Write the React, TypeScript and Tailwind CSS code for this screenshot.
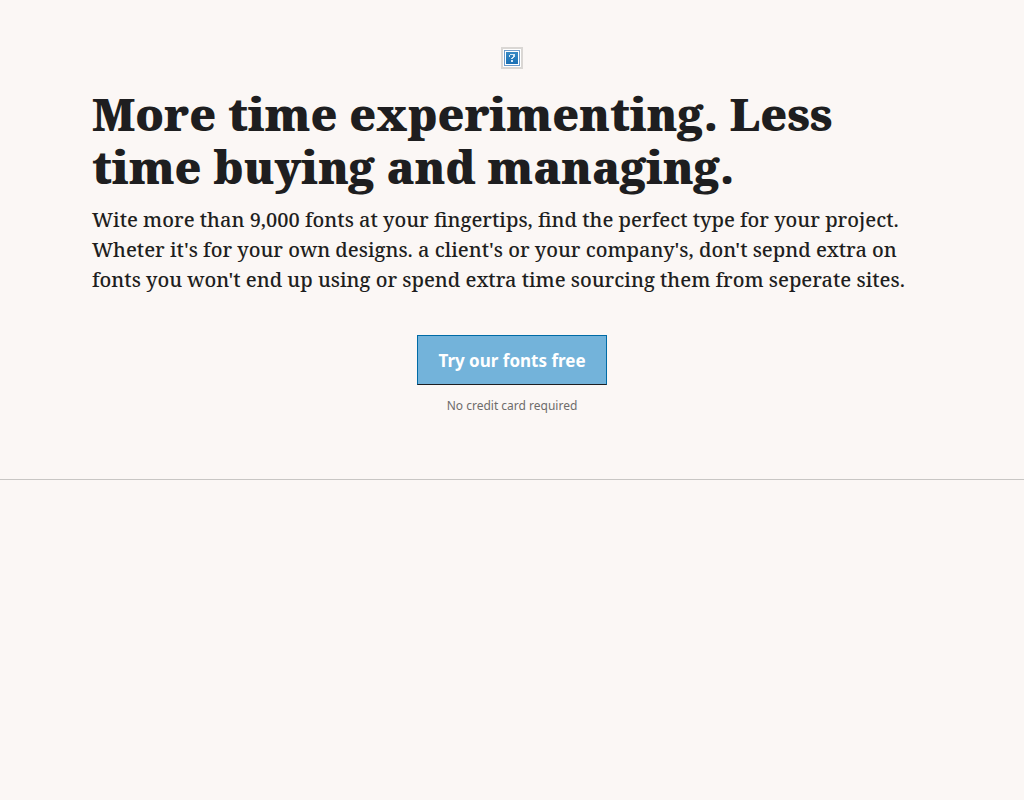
function MissingImage() {
  return (
    <svg className="mx-auto block" width="22" height="22" viewBox="0 0 22 22" role="img" aria-label="Missing image">
      <defs>
        <linearGradient id="tile" x1="0" y1="0" x2="0" y2="1">
          <stop offset="0" stopColor="#3689c4" />
          <stop offset="1" stopColor="#1a70b4" />
        </linearGradient>
      </defs>
      <rect x="1" y="1" width="20" height="20" fill="#fff" stroke="#dad7d4" strokeWidth="2" />
      <rect x="3.5" y="3.5" width="15" height="15" fill="#fff" stroke="#6f9dcb" />
      <rect x="5" y="5" width="12" height="12" fill="url(#tile)" />
      <path d="M8 8h1v2H8zM9 7h3v1H9zM12 7h2v3h-2zM11 10h2v1h-2zM10 11h2v1h-2zM10 13h2v2h-2z" fill="#d5e7f5" />
    </svg>
  );
}

export default function App() {
  return (
    <div className="min-h-screen bg-[#fbf7f5] text-[#1e1e20]">
      <section className="border-b border-[#c8c6c4] px-23 pt-[47px] pb-16">
        <MissingImage />
        <h1 className="mt-[18px] font-['Noto_Serif','Liberation_Serif',serif] text-[45px] leading-[53px] font-black">
          More time experimenting. Less<br />time buying and managing.
        </h1>
        <p className="mt-3 font-['Noto_Serif','Liberation_Serif',serif] text-[20px] leading-[30px] font-medium">
          Wite more than 9,000 fonts at your fingertips, find the perfect type for your project.<br />
          Wheter it's for your own designs. a client's or your company's, don't sepnd extra on<br />
          fonts you won't end up using or spend extra time sourcing them from seperate sites.
        </p>
        <div className="mt-10 flex flex-col items-center font-['Noto_Sans',sans-serif]">
          <button className="h-[50px] border border-[#006ba6] border-b-[#1e1e20] bg-[#73b3da] px-5 pt-0.5 text-[17px] font-bold text-white">Try our fonts free</button>
          <p className="mt-3 text-[12px] leading-[18px] text-[#6e6c6b]">No credit card required</p>
        </div>
      </section>
    </div>
  );
}
